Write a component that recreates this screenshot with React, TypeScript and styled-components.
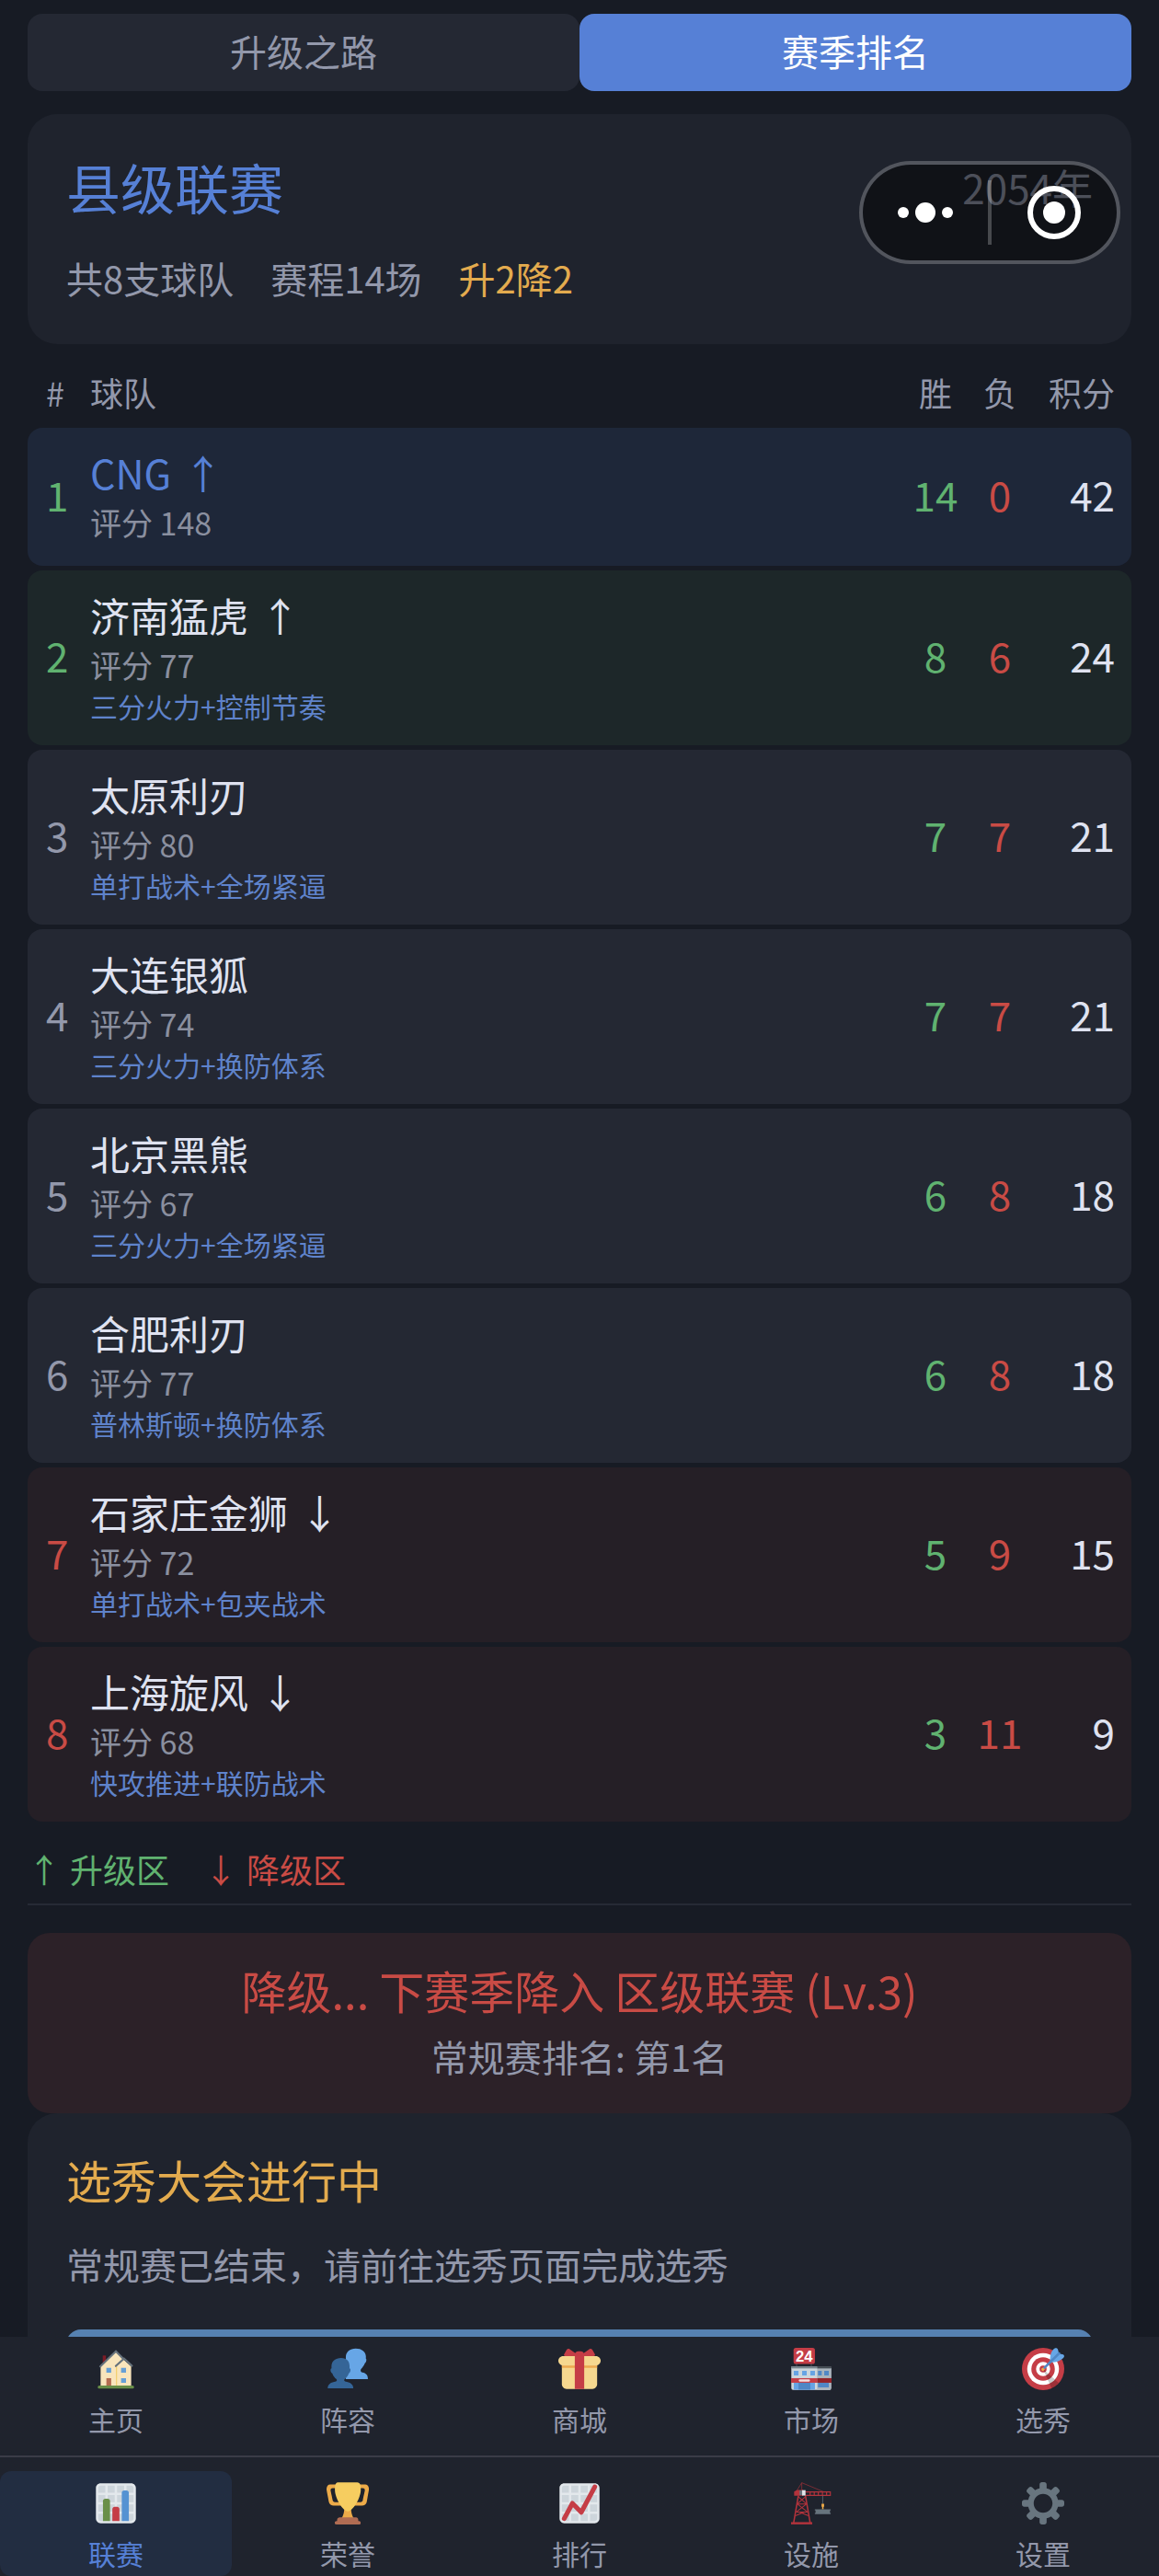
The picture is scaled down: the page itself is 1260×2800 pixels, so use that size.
import React from 'react';
import styled, { createGlobalStyle } from 'styled-components';

type Zone = 'mine' | 'up' | 'normal' | 'down';

interface Team {
  name: string;
  rating: number;
  tactic?: string;
  wins: number;
  losses: number;
  points: number;
  zone: Zone;
  arrow?: string;
}

const teams: Array<Team> = [
  {name: 'CNG', rating: 148, wins: 14, losses: 0, points: 42, zone: 'mine', arrow: '↑'},
  {name: '济南猛虎', rating: 77, tactic: '三分火力+控制节奏', wins: 8, losses: 6, points: 24, zone: 'up', arrow: '↑'},
  {name: '太原利刃', rating: 80, tactic: '单打战术+全场紧逼', wins: 7, losses: 7, points: 21, zone: 'normal'},
  {name: '大连银狐', rating: 74, tactic: '三分火力+换防体系', wins: 7, losses: 7, points: 21, zone: 'normal'},
  {name: '北京黑熊', rating: 67, tactic: '三分火力+全场紧逼', wins: 6, losses: 8, points: 18, zone: 'normal'},
  {name: '合肥利刃', rating: 77, tactic: '普林斯顿+换防体系', wins: 6, losses: 8, points: 18, zone: 'normal'},
  {name: '石家庄金狮', rating: 72, tactic: '单打战术+包夹战术', wins: 5, losses: 9, points: 15, zone: 'down', arrow: '↓'},
  {name: '上海旋风', rating: 68, tactic: '快攻推进+联防战术', wins: 3, losses: 11, points: 9, zone: 'down', arrow: '↓'},
];

const colors = {
  page: '#171b24',
  card: '#1f232d',
  row: '#242833',
  muted: '#9398ab',
  text: '#dfe2f0',
  blue: '#5680d6',
  green: '#60b270',
  red: '#c94b45',
  gold: '#e3ab4e',
};

const rowColor: Record<Zone, string> = {
  mine: '#1e2739',
  up: '#1d2729',
  normal: colors.row,
  down: '#251f26',
};

const rankColor: Record<Zone, string> = {
  mine: colors.green,
  up: colors.green,
  normal: colors.muted,
  down: colors.red,
};

const App = () => {
  return (
    <React.Fragment>
      <GlobalStyle/>
      <Shell>
        <Content>
          <Tabs>
            <Tab type="button">升级之路</Tab>
            <Tab type="button" $active>赛季排名</Tab>
          </Tabs>
          <LeagueCard/>
          <Standings/>
          <Legend>
            <LegendItem $color={colors.green}><span>↑</span> <span>升级区</span></LegendItem>
            <LegendItem $color={colors.red}><span>↓</span> <span>降级区</span></LegendItem>
          </Legend>
          <ResultBanner>
            <ResultTitle>降级... 下赛季降入 区级联赛 (Lv.3)</ResultTitle>
            <ResultText>常规赛排名: 第1名</ResultText>
          </ResultBanner>
          <Card>
            <DraftTitle>选秀大会进行中</DraftTitle>
            <DraftText>常规赛已结束，请前往选秀页面完成选秀</DraftText>
            <DraftButton type="button" aria-label="前往选秀"/>
          </Card>
        </Content>
        <BottomNav/>
      </Shell>
      <Capsule/>
    </React.Fragment>
  );
}

const LeagueCard = () => (
  <Card>
    <LeagueHead>
      <LeagueName>县级联赛</LeagueName>
      <LeagueYear>2054年</LeagueYear>
    </LeagueHead>
    <LeagueInfo>
      <span>共8支球队</span>
      <span>赛程14场</span>
      <Gold>升2降2</Gold>
    </LeagueInfo>
  </Card>
);

const Standings = () => (
  <Table>
    <thead>
      <tr>
        <RankHead>#</RankHead>
        <TeamHead>球队</TeamHead>
        <CountHead>胜</CountHead>
        <CountHead>负</CountHead>
        <PointsHead>积分</PointsHead>
      </tr>
    </thead>
    <tbody>
      {teams.map((team: Team, index: number) => (
        <TeamRow key={team.name} $zone={team.zone}>
          <RankCell $color={rankColor[team.zone]}>{index + 1}</RankCell>
          <TeamCell>
            <TeamName $mine={team.zone === 'mine'}>
              <span>{team.name}</span>
              {team.arrow && <span>{team.arrow}</span>}
            </TeamName>
            <Rating>{`评分 ${team.rating}`}</Rating>
            {team.tactic && <Tactic>{team.tactic}</Tactic>}
          </TeamCell>
          <CountCell $color={colors.green}>{team.wins}</CountCell>
          <CountCell $color={colors.red}>{team.losses}</CountCell>
          <PointsCell>{team.points}</PointsCell>
        </TeamRow>
      ))}
    </tbody>
  </Table>
);

const Capsule = () => (
  <CapsuleBox>
    <CapsuleButton type="button" aria-label="更多">
      <svg width="60" height="24" viewBox="0 0 60 24" fill="#fff">
        <circle cx="6" cy="12" r="6"/>
        <circle cx="30" cy="12" r="11"/>
        <circle cx="54" cy="12" r="6"/>
      </svg>
    </CapsuleButton>
    <CapsuleLine/>
    <CapsuleButton type="button" aria-label="关闭">
      <svg width="58" height="58" viewBox="0 0 58 58">
        <circle cx="29" cy="29" r="26" fill="none" stroke="#fff" strokeWidth="6"/>
        <circle cx="29" cy="29" r="12" fill="#fff"/>
      </svg>
    </CapsuleButton>
  </CapsuleBox>
);

const HouseIcon = () => (
  <Icon viewBox="0 0 36 36">
    <path fill="#7d1c27" d="M6.8 6.5h2.7v7H6.8z"/>
    <path fill="#f9e5bc" d="M5 15.5 18 3.2l6.5 6.8L31 15.8V32.5H5z"/>
    <path fill="#f2cf72" d="M18 15.5h1v17h-1z"/>
    <path fill="none" stroke="#66727c" strokeWidth="1.7" strokeLinecap="round" d="M4.7 15.8 18 3l5.8 5.8M17.9 15.5l7-6.4 6.7 6.2"/>
    <path fill="#67a0d6" d="M9.9 17H14v4.1H9.9zM22.4 17h4.2v4.1h-4.2zM22.4 25.8h4.2v4h-4.2z"/>
    <path fill="#b46c51" d="M9.9 25.8H14v6.5H9.9z"/>
    <rect fill="#698f48" x="2.6" y="32" width="30.8" height="2.6" rx="1.2"/>
  </Icon>
);

const PeopleIcon = () => (
  <Icon viewBox="0 0 36 36">
    <path fill="#67a6e6" d="M24.8.5c-5 0-8.400 2.900-8.400 7.300V26.600h18.800c0-3.600-1.700-5-4.700-5.600-1-.2-1.500-.9-1.500-2 0-.9 2.700-3.200 3.600-5.900 1.200-.7 1.800-3.500.8-4.100.1-.5.1-1 .1-1.500C33.500 3.200 29.900.5 24.800.5z"/>
    <path fill="#356597" d="M12.400 8.600c-4.900 0-8.200 2.700-8.200 7.200 0 .5 0 1 .1 1.600-1.400.3-1.100 3.400.6 4.300.8 2.500 2.300 4 3.300 4.700.8.6.8 1.900-.2 2.100C3.700 29.200 1 30.800 1 34.500h21.800c0-3.700-2.700-5.300-7-6-1-.2-1-1.500-.2-2.100 1-.7 2.500-2.200 3.300-4.700 1.700-.9 2-4 .6-4.300.1-.6.1-1.100.1-1.600 0-4.500-2.300-7.200-7.200-7.200z"/>
  </Icon>
);

const GiftIcon = () => (
  <Icon viewBox="0 0 36 36">
    <path fill="#f6d88f" d="M33 31c0 2.200-1.800 4-4 4H7c-2.200 0-4-1.800-4-4V14c0-2.200 1.800-4 4-4h22c2.200 0 4 1.800 4 4v17z"/>
    <path fill="#f6d88f" d="M36 11c0 2.200-1.800 4-4 4H4c-2.200 0-4-1.800-4-4s1.800-4 4-4h28c2.200 0 4 1.800 4 4z"/>
    <path fill="#edab50" d="M3 15h30v2H3z"/>
    <path fill="#c53d46" d="M19 3h-2c-1.657 0-3 1.343-3 3v29h8V6c0-1.657-1.343-3-3-3z"/>
    <path fill="#c53d46" d="M16 7c1.100 0 1.263-.516.361-1.147L9.639 1.147c-.902-.631-2.085-.366-2.631.589L4.992 5.264C4.446 6.219 4.900 7 6 7h10zm4 0c-1.100 0-1.263-.516-.361-1.147l6.723-4.706c.901-.631 2.085-.366 2.631.589l2.016 3.527C31.554 6.219 31.100 7 30 7H20z"/>
  </Icon>
);

const StoreIcon = () => (
  <Icon viewBox="0 0 36 36">
    <path fill="#3f464e" d="M5 13h1v3H5zM17.500 13h1v3h-1z"/>
    <rect fill="#c53d46" x="2.900" width="18.200" height="13.700" rx="2"/>
    <StoreText x="12" y="11.500">24</StoreText>
    <rect fill="#cdd6dc" x="1" y="16" width="34" height="19.800" rx="1.500"/>
    <path fill="#aab4bc" d="M23 16h11.500v19.700H23z"/>
    <path fill="#78848c" d="M.8 15.700H23v1.800H.8z"/>
    <path fill="#434a52" d="M23 15.700h12.200v1.800H23z"/>
    <path fill="#66a3e4" d="M3.100 19.600h4v3.900h-4zM10.200 19.600h3.900v3.900h-3.900zM17.200 19.600h3.900v3.900h-3.900zM3.100 29.700h18v6h-18z"/>
    <path fill="#5087c5" d="M23.700 19.600h3.200v3.900h-3.200zM29 19.600h3.900v3.900H29zM7.100 29.700h10.100v6H7.100zM23.700 29.700h9.200v4h-9.200z"/>
    <path fill="#c53d46" d="M.8 25.800H23v3.900H.8z"/>
    <path fill="#922329" d="M23 25.800h12.200v3.900H23z"/>
    <rect fill="#f4dfe0" x="7.300" y="26.800" width="9.600" height="1.900" rx="0.900"/>
  </Icon>
);

const TargetIcon = () => (
  <Icon viewBox="0 0 36 36">
    <circle fill="#c53d46" cx="18" cy="18" r="18"/>
    <circle fill="#fff" cx="18" cy="18" r="13.500"/>
    <circle fill="#c53d46" cx="18" cy="18" r="10"/>
    <circle fill="#fff" cx="18" cy="18" r="6"/>
    <circle fill="#c53d46" cx="18" cy="18" r="3"/>
    <path opacity=".2" d="M18.240 18.280l13.144 11.593s-2.721 3.473-5.943 5.021L18.080 18.420z"/>
    <path fill="#edab49" d="M18.300 19.500c-.5.200-1.100.1-1.400-.3-.4-.4-.5-1-.3-1.500l1.900-1.200 1.300 1.300z"/>
    <path fill="#67a6e6" d="M24 11.500C23.700 8 24.200 4.300 26.500 1.500 28-.3 29.700-.2 30.600 1.300l.9 3.500 3.600.9c1.200.7 1.200 2-.3 3.300-2.700 2.400-6.300 3.500-10 3.300z"/>
    <path fill="none" stroke="#5087c5" strokeWidth="2" strokeLinecap="round" d="M19.200 16.900 31.600 4.700"/>
  </Icon>
);

const chartGrid = 'M31 1H5C2.791 1 1 2.791 1 5v26c0 2.209 1.791 4 4 4h26c2.209 0 4-1.791 4-4V5c0-2.209-1.791-4-4-4zm0 2c1.103 0 2 .897 2 2v4h-6V3h4zm-4 16h6v6h-6v-6zm0-2v-6h6v6h-6zM25 3v6h-6V3h6zm-6 8h6v6h-6v-6zm0 8h6v6h-6v-6zM17 3v6h-6V3h6zm-6 8h6v6h-6v-6zm0 8h6v6h-6v-6zM3 5c0-1.103.897-2 2-2h4v6H3V5zm0 6h6v6H3v-6zm0 8h6v6H3v-6zm2 14c-1.103 0-2-.897-2-2v-4h6v6H5zm6 0v-6h6v6h-6zm8 0v-6h6v6h-6zm12 0h-4v-6h6v4c0 1.103-.897 2-2 2z';

const BarsIcon = () => (
  <Icon viewBox="0 0 36 36">
    <rect fill="#cdd5db" x="2" y="2" width="32" height="32" rx="3"/>
    <path fill="#e3e8ec" d={chartGrid}/>
    <path fill="#698f48" d="M13 33H7V16c0-1.104.896-2 2-2h2c1.104 0 2 .896 2 2v17z"/>
    <path fill="#5592d2" d="M29 33h-6V9c0-1.104.896-2 2-2h2c1.104 0 2 .896 2 2v24z"/>
    <path fill="#c53d46" d="M21 33h-6V23c0-1.104.896-2 2-2h2c1.104 0 2 .896 2 2v10z"/>
  </Icon>
);

const TrophyIcon = () => (
  <Icon viewBox="0 0 36 36">
    <path fill="#edab49" d="M5.123 5h6C12.227 5 13 4.896 13 6V4c0-1.104-.773-2-1.877-2h-8c-2 0-3.583 2.125-3 5 0 0 1.791 9.375 1.917 9.958C2.373 18.500 4.164 20 6.081 20h6.958c1.105 0-.039-1.896-.039-3v-2c0 1.104-.773 2-1.877 2h-4c-1.104 0-1.833-1.042-2-2S3.539 7.667 3.539 7.667C3.206 5.750 4.018 5 5.123 5zm25.812 0h-6C23.831 5 22 4.896 22 6V4c0-1.104 1.831-2 2.935-2h8c2 0 3.584 2.125 3 5 0 0-1.633 9.419-1.771 10-.354 1.500-2.042 3-4 3h-7.146C21.914 20 22 18.104 22 17v-2c0 1.104 1.831 2 2.935 2h4c1.104 0 1.834-1.042 2-2s1.584-7.333 1.584-7.333C32.851 5.750 32.040 5 30.935 5zM20.832 22c0-6.958-2.709 0-2.709 0s-3-6.958-3 0-3.291 10-3.291 10h12.292c-.001 0-3.292-3.042-3.292-10z"/>
    <path fill="#f6cd60" d="M29.123 6.577c0 6.775-6.770 18.192-11 18.192-4.231 0-11-11.417-11-18.192 0-5.195 1-6.319 3-6.319 1.374 0 6.025-.027 8-.027l7-.001c2.917-.001 4 .684 4 6.347z"/>
    <path fill="#b06c53" d="M27 33c0 1.104.227 2-.877 2h-16C9.018 35 9 34.104 9 33v-1c0-1.104 1.164-2 2.206-2h13.917c1.042 0 1.877.896 1.877 2v1z"/>
    <path fill="#b06c53" d="M29 34.625c0 .76.165 1.375-1.252 1.375H8.498C7.206 36 7 35.385 7 34.625v-.25C7 33.615 7.738 33 8.498 33h19.250c.759 0 1.252.615 1.252 1.375v.25z"/>
  </Icon>
);

const TrendIcon = () => (
  <Icon viewBox="0 0 36 36">
    <rect fill="#cdd5db" x="2" y="2" width="32" height="32" rx="3"/>
    <path fill="#e3e8ec" d={chartGrid}/>
    <path fill="none" stroke="#c53d46" strokeWidth="4" strokeLinecap="round" strokeLinejoin="round" d="M5 31l7-13 7.500 7.600L31 4"/>
  </Icon>
);

const CraneIcon = () => (
  <Icon viewBox="0 0 36 36">
    <path fill="none" stroke="#a9323a" strokeWidth="0.500" d="M4.200 9.500 9.900.5l18.800 7.800M9.900.5V7"/>
    <path fill="none" stroke="#b3333c" strokeWidth="0.900" d="M13 8.300h21.200v3H13M17 8.300v3M20.500 8.300v3M24 8.300v3M27.500 8.300v3M31 8.300v3"/>
    <path fill="none" stroke="#b3333c" strokeWidth="1.200" d="M7 11.500 3 34.500M13 11.500l4 23"/>
    <path fill="none" stroke="#b3333c" strokeWidth="0.800" d="M7 12.500l7 6M13 12.500l-7 6M6 18.500h8M6 18.500l9 7M14 18.500l-9 7M5 25.500h10M8 25.500l7.500 3M12 25.500l-7.500 3"/>
    <path fill="#b3333c" d="M.8 34h18v1.900H.8z"/>
    <path fill="#b3333c" d="M3.400 8 6 6.700h5v4.900H3.400z"/>
    <path fill="#67747d" d="M8 7h2.500v4H8z"/>
    <path fill="#e1e6ea" d="M10.200 6.800h2.900v4.600h-2.900z"/>
    <path fill="none" stroke="#67747d" strokeWidth="0.600" d="M27.700 11.500v7"/>
    <path fill="#edab49" d="M26.700 18.300h2.200V21h-.5v2h-1.200v-2h-.5z"/>
    <path fill="#67747d" d="M21 23h13.500v1h-.6v2.200h.6v1H21v-1h.6V24H21z"/>
  </Icon>
);

const GearIcon = () => (
  <Icon viewBox="0 0 36 36">
    <path fill="#68757f" d="M34 15h-3.362c-.324-1.369-.864-2.651-1.582-3.814l2.379-2.379c.781-.781.781-2.048 0-2.829l-1.414-1.414c-.781-.781-2.047-.781-2.828 0l-2.379 2.379C23.650 6.225 22.369 5.686 21 5.362V2c0-1.104-.896-2-2-2h-2c-1.104 0-2 .896-2 2v3.362c-1.369.324-2.651.864-3.814 1.582L8.808 4.565c-.781-.781-2.048-.781-2.828 0L4.565 5.979c-.781.781-.781 2.048-.001 2.829l2.379 2.379C6.225 12.350 5.686 13.632 5.362 15H2c-1.104 0-2 .896-2 2v2c0 1.104.896 2 2 2h3.362c.324 1.368.864 2.650 1.582 3.813l-2.379 2.379c-.78.78-.78 2.048.001 2.829l1.414 1.414c.78.78 2.047.78 2.828 0l2.379-2.379c1.163.719 2.445 1.258 3.814 1.582V34c0 1.104.896 2 2 2h2c1.104 0 2-.896 2-2v-3.362c1.368-.324 2.650-.864 3.813-1.582l2.379 2.379c.781.781 2.047.781 2.828 0l1.414-1.414c.781-.781.781-2.048 0-2.829l-2.379-2.379c.719-1.163 1.258-2.445 1.582-3.814H34c1.104 0 2-.896 2-2v-2C36 15.896 35.104 15 34 15zM18 26c-4.418 0-8-3.582-8-8s3.582-8 8-8 8 3.582 8 8-3.582 8-8 8z"/>
  </Icon>
);

const navRows = [
  [
    {label: '主页', icon: <HouseIcon/>},
    {label: '阵容', icon: <PeopleIcon/>},
    {label: '商城', icon: <GiftIcon/>},
    {label: '市场', icon: <StoreIcon/>},
    {label: '选秀', icon: <TargetIcon/>},
  ],
  [
    {label: '联赛', icon: <BarsIcon/>, active: true},
    {label: '荣誉', icon: <TrophyIcon/>},
    {label: '排行', icon: <TrendIcon/>},
    {label: '设施', icon: <CraneIcon/>},
    {label: '设置', icon: <GearIcon/>},
  ],
];

const BottomNav = () => (
  <Nav>
    {navRows.map((row, index) => (
      <NavRow key={index}>
        {row.map((item: {label: string, icon: React.ReactNode, active?: boolean}) => (
          <NavItem key={item.label} href="#" $active={item.active}>
            {item.icon}
            {item.label}
          </NavItem>
        ))}
      </NavRow>
    ))}
  </Nav>
);

const GlobalStyle = createGlobalStyle`
  * {
    box-sizing: border-box;
  }
  body {
    margin: 0;
    background: ${colors.page};
    color: ${colors.text};
    font-family: 'Noto Sans CJK SC', 'Noto Sans', sans-serif;
  }
  button {
    border: 0;
    padding: 0;
    font-family: inherit;
    cursor: pointer;
  }
  h1, h2, p {
    margin: 0;
    font-weight: 400;
  }
`;

const Shell = styled.div`
  display: flex;
  flex-direction: column;
  height: 100vh;
`;

const Content = styled.main`
  flex: 1;
  min-height: 0;
  padding: 15px 30px 0;
  overflow-y: auto;
  scrollbar-width: none;
`;

const Tabs = styled.div`
  display: flex;
  margin-bottom: 25px;
`;

const Tab = styled.button<{$active?: boolean}>`
  flex: 1;
  height: 84px;
  padding-bottom: 4px;
  border-radius: 16px;
  background: ${({$active}) => $active ? colors.blue : colors.row};
  color: ${({$active}) => $active ? '#fff' : colors.muted};
  font-size: 40px;
`;

const Card = styled.section`
  padding: 40px 42px 44px;
  border-radius: 32px;
  background: ${colors.card};
`;

const LeagueHead = styled.div`
  display: flex;
  justify-content: space-between;
  align-items: center;
  margin-bottom: 32px;
`;

const LeagueName = styled.h1`
  color: ${colors.blue};
  font-size: 59px;
  line-height: 78px;
`;

const LeagueYear = styled.span`
  color: ${colors.muted};
  font-size: 44px;
  line-height: 78px;
`;

const LeagueInfo = styled.div`
  display: flex;
  gap: 40px;
  color: ${colors.muted};
  font-size: 40px;
  line-height: 56px;
`;

const Gold = styled.span`
  color: ${colors.gold};
`;

const Table = styled.table`
  width: 100%;
  table-layout: fixed;
  border-collapse: separate;
  border-spacing: 0 5px;
`;

const HeadCell = styled.th`
  padding: 27px 0 14px;
  color: ${colors.muted};
  font-size: 36px;
  font-weight: 400;
  line-height: 40px;
`;

const RankHead = styled(HeadCell)`
  width: 68px;
  padding-left: 20px;
  text-align: left;
`;

const TeamHead = styled(HeadCell)`
  text-align: left;
`;

const CountHead = styled(HeadCell)`
  width: 70px;
`;

const PointsHead = styled(HeadCell)`
  width: 108px;
  padding-right: 18px;
  text-align: right;
`;

const TeamRow = styled.tr<{$zone: Zone}>`
  & > td {
    background: ${({$zone}) => rowColor[$zone]};
  }
`;

const Cell = styled.td`
  padding: 17px 0 23px;
  font-size: 44px;
  line-height: 62px;
`;

const RankCell = styled(Cell)<{$color: string}>`
  padding-left: 20px;
  border-radius: 16px 0 0 16px;
  color: ${({$color}) => $color};
`;

const TeamCell = styled(Cell)``;

const CountCell = styled(Cell)<{$color: string}>`
  color: ${({$color}) => $color};
  text-align: center;
`;

const PointsCell = styled(Cell)`
  padding-right: 18px;
  border-radius: 0 16px 16px 0;
  text-align: right;
`;

const TeamName = styled.div<{$mine: boolean}>`
  display: flex;
  gap: 13px;
  color: ${({$mine}) => $mine ? colors.blue : colors.text};
  font-size: 43px;
`;

const Rating = styled.div`
  color: #8a8f9f;
  font-size: 34px;
  line-height: 48px;
`;

const Tactic = styled.div`
  color: #5f83cb;
  font-size: 30px;
  line-height: 40px;
`;

const Legend = styled.div`
  display: flex;
  gap: 38px;
  margin-bottom: 30px;
  padding: 20px 0 12px;
  border-bottom: 2px solid #262a35;
`;

const LegendItem = styled.span<{$color: string}>`
  display: flex;
  gap: 10px;
  color: ${({$color}) => $color};
  font-size: 36px;
  line-height: 52px;
`;

const ResultBanner = styled.section`
  display: flex;
  flex-direction: column;
  gap: 16px;
  padding: 31px 34px 37px;
  border-radius: 24px;
  background: #2c2128;
  text-align: center;
`;

const ResultTitle = styled.h2`
  color: ${colors.red};
  font-size: 49px;
  line-height: 62px;
`;

const ResultText = styled.p`
  color: ${colors.muted};
  font-size: 40px;
  line-height: 50px;
`;

const DraftTitle = styled.h2`
  margin-bottom: 32px;
  color: ${colors.gold};
  font-size: 49px;
  line-height: 64px;
`;

const DraftText = styled.p`
  margin-bottom: 43px;
  color: ${colors.muted};
  font-size: 40px;
  line-height: 56px;
`;

const DraftButton = styled.button`
  display: block;
  width: 100%;
  height: 84px;
  border-radius: 16px;
  background: #5681b1;
`;

const Nav = styled.nav`
  background: ${colors.card};
`;

const NavRow = styled.div`
  display: grid;
  grid-template-columns: repeat(5, 1fr);

  & + & {
    margin-top: 15px;
    padding-top: 15px;
    border-top: 2px solid #3a3c47;
  }
`;

const NavItem = styled.a<{$active?: boolean}>`
  display: flex;
  flex-direction: column;
  align-items: center;
  gap: 11px;
  height: 114px;
  padding-top: 12px;
  border-radius: 12px;
  background: ${({$active}) => $active ? '#222d41' : 'transparent'};
  color: ${({$active}) => $active ? colors.blue : colors.muted};
  font-size: 30px;
  line-height: 40px;
  text-decoration: none;
`;

const Icon = styled.svg`
  width: 46px;
  height: 46px;
`;

const StoreText = styled.text`
  fill: #fff;
  font-family: 'Liberation Sans', sans-serif;
  font-size: 13px;
  font-weight: 700;
  text-anchor: middle;
`;

// floats over the page like the mini program menu
const CapsuleBox = styled.div`
  position: fixed;
  top: 175px;
  right: 42px;
  display: flex;
  align-items: center;
  width: 284px;
  height: 112px;
  border: 4px solid rgba(255, 255, 255, 0.23);
  border-radius: 56px;
  background: rgba(0, 0, 0, 0.48);
  background-clip: padding-box;
`;

const CapsuleButton = styled.button`
  display: flex;
  flex: 1;
  align-items: center;
  justify-content: center;
  background: none;
`;

const CapsuleLine = styled.span`
  width: 4px;
  height: 70px;
  background: rgba(255, 255, 255, 0.23);
`;

export default App;
